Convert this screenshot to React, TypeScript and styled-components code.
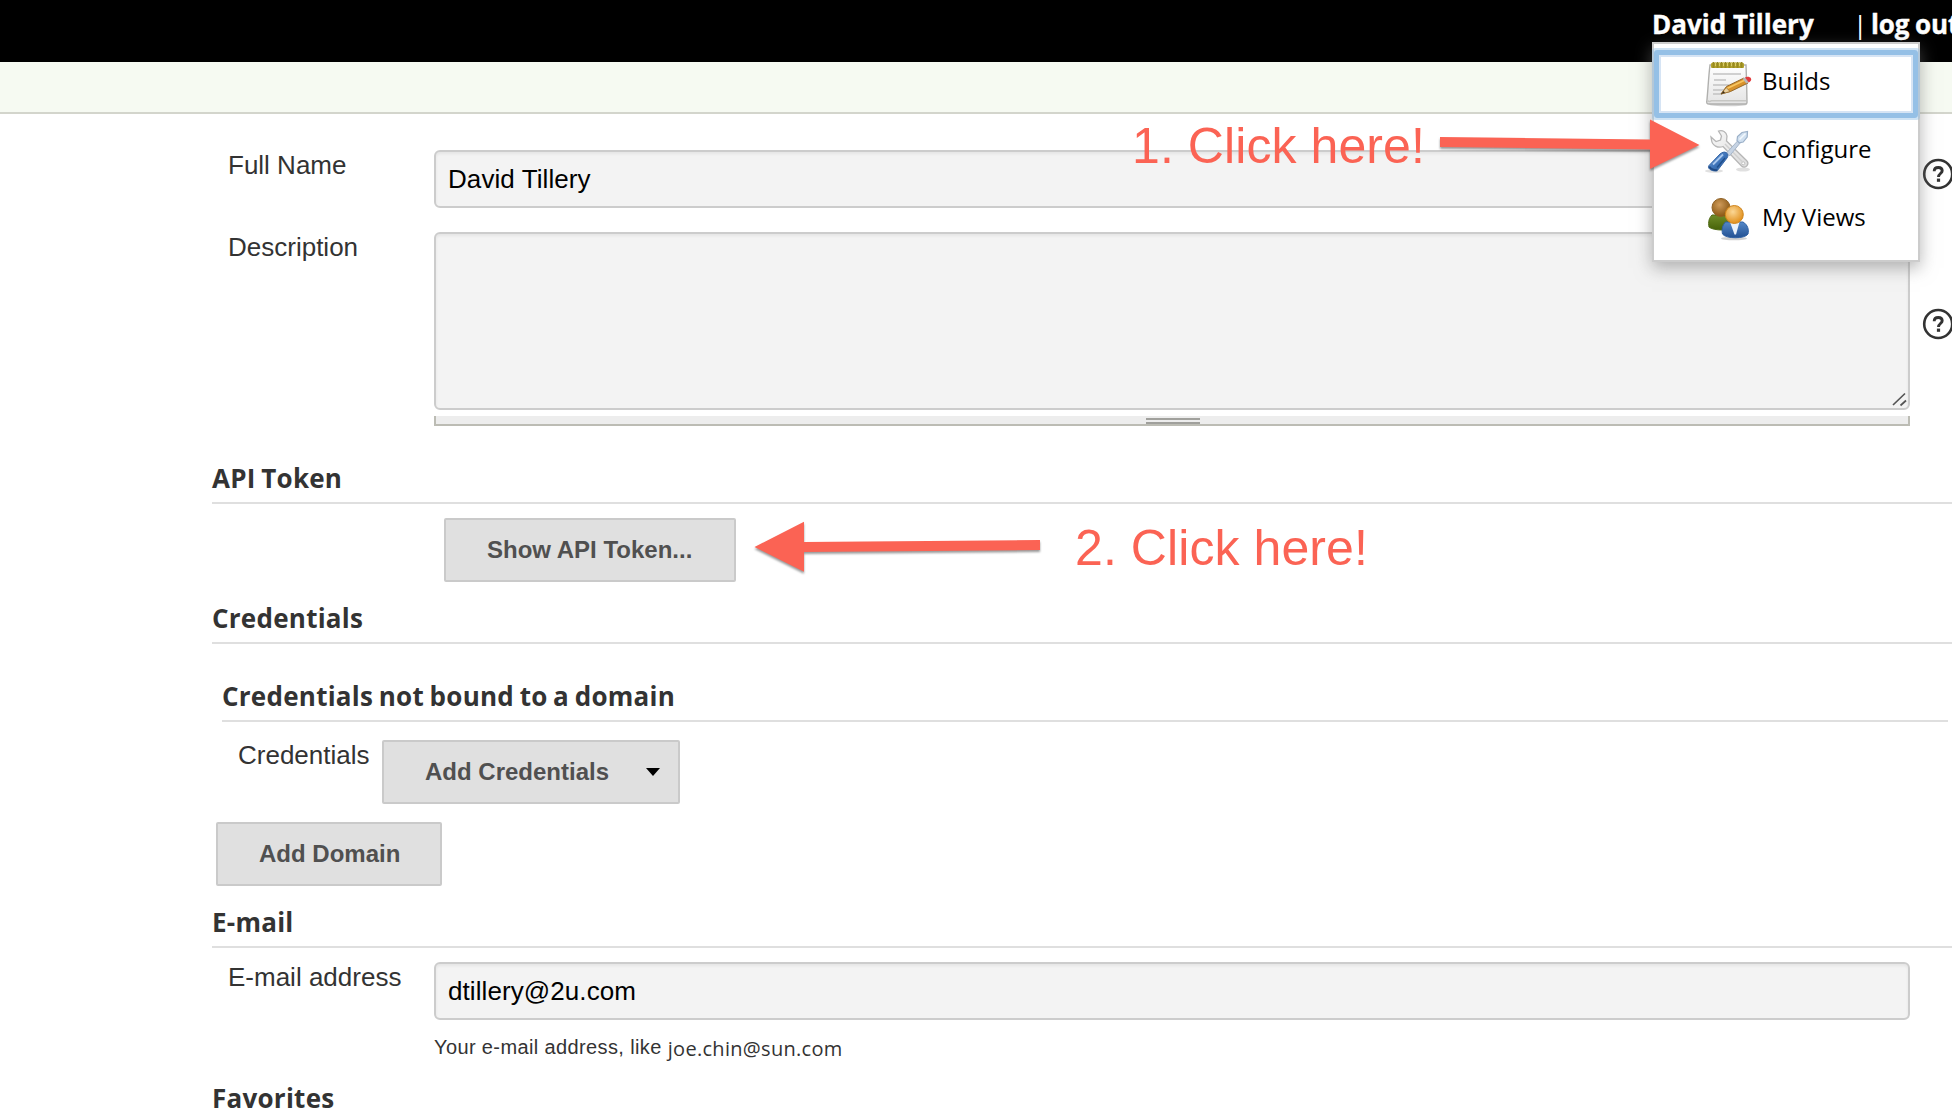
import React from "react";
import styled, { createGlobalStyle } from "styled-components";

const GlobalStyle = createGlobalStyle`
  html, body { margin: 0; padding: 0; background: #fff; }
  body { overflow: hidden; }
  *, *::before, *::after { box-sizing: border-box; }
`;

const sans = `"Liberation Sans", Arial, Helvetica, sans-serif`;
const open = `"Open Sans", "Noto Sans", sans-serif`;

const Page = styled.div`
  position: relative;
  width: 1952px;
  height: 1110px;
  overflow: hidden;
  background: #fff;
  color: #333;
  font: 26px/30px ${sans};
`;

const Header = styled.header`
  display: flex;
  justify-content: flex-start;
  height: 62px;
  padding: 6px 0 0 1652px;
  background: #000;
  color: #fff;
  font: bold 26px/36px ${open};
  white-space: nowrap;
  -webkit-text-stroke: 0.4px #fff;
`;

const UserName = styled.span`
  flex: none;
  width: 201px;
`;

const Divider = styled.span`
  flex: none;
  width: 18px;
  font-weight: 400;
  text-align: left;
  -webkit-text-stroke: 0;
`;

const LogOut = styled.a`
  flex: none;
  color: #fff;
  letter-spacing: -0.1px;
  word-spacing: -1px;
`;

const Breadcrumbs = styled.div`
  height: 52px;
  background: #f6faf2;
  border-bottom: 2px solid #d3d5cc;
`;

const Form = styled.main`
  display: flex;
  flex-direction: column;
  padding: 36px 0 0 212px;
`;

const Row = styled.div<{ $gap?: number }>`
  display: flex;
  align-items: flex-start;
  padding-left: 16px;
  margin-top: ${(p) => p.$gap ?? 0}px;
`;

const Label = styled.label<{ $width?: number }>`
  flex: none;
  width: ${(p) => p.$width ?? 206}px;
  line-height: 30px;
  white-space: nowrap;
`;

const Control = styled.div`
  display: flex;
  flex: none;
  flex-direction: column;
  width: 1476px;
`;

const field = `
  display: block;
  width: 100%;
  margin: 0;
  padding: 0 12px;
  border: 2px solid #ccc;
  border-radius: 6px;
  background: #f3f3f3;
  box-shadow: inset 0 2px 3px rgba(0, 0, 0, 0.06);
  color: #000;
  font: 26px/30px ${sans};
  letter-spacing: 0.08px;
  outline: none;
`;

const TextInput = styled.input`
  ${field}
  height: 58px;
`;

const AreaFrame = styled.div`
  position: relative;
  height: 178px;
`;

const TextArea = styled.textarea`
  ${field}
  height: 178px;
  resize: none;
`;

const ResizeCorner = styled.svg`
  position: absolute;
  right: 2px;
  bottom: 2px;
`;

const DragHandle = styled.div`
  display: flex;
  justify-content: center;
  height: 10px;
  margin-top: 6px;
  padding-top: 2px;
  background: #ededed;
  border: 2px solid #bcbcb4;
  border-top: 0;
`;

const Grip = styled.div`
  width: 54px;
  height: 6px;
  border: 2px solid #a0a09c;
  border-width: 2px 0;
  margin-left: 2px;
`;

const HelpSlot = styled.div`
  align-self: center;
  flex: none;
  width: 32px;
  height: 32px;
  margin: 0 0 10px 12px;
`;

const SectionTitle = styled.h2<{ $gap: number; $inset?: boolean }>`
  height: 44px;
  margin: ${(p) => p.$gap}px ${(p) => (p.$inset ? 4 : 0)}px 0 ${(p) => (p.$inset ? 10 : 0)}px;
  border-bottom: 2px solid #dfdfdf;
  font: bold 26px/36px ${open};
  letter-spacing: 0.25px;
  word-spacing: -1.4px;
  white-space: nowrap;
`;

const ButtonRow = styled.div<{ $indent: number; $gap: number }>`
  display: flex;
  padding-left: ${(p) => p.$indent}px;
  margin-top: ${(p) => p.$gap}px;
`;

const Button = styled.button<{ $width: number }>`
  display: flex;
  align-items: center;
  justify-content: space-between;
  width: ${(p) => p.$width}px;
  height: 64px;
  padding: 0 18px 0 41px;
  border: 2px solid #cacaca;
  border-radius: 2px;
  background: #e0e0e0;
  color: #505050;
  font: bold 24px/28px ${sans};
  white-space: nowrap;
`;

const Hint = styled.div`
  margin-top: 15px;
  font-size: 20px;
  line-height: 24px;
  white-space: nowrap;
  letter-spacing: 0.38px;
`;

const HintMail = styled.span`
  display: inline-block;
  transform: translateY(2px);
  font-family: ${open};
  letter-spacing: 0.3px;
`;

const Menu = styled.nav`
  position: absolute;
  left: 1652px;
  top: 42px;
  width: 268px;
  height: 220px;
  padding: 11px 5px 0;
  border: 2px solid #ccc;
  background: #fff;
  box-shadow: 0 6px 16px rgba(120, 120, 120, 0.55);
`;

const MenuItem = styled.a<{ $focused?: boolean }>`
  display: flex;
  align-items: center;
  height: 58px;
  margin-bottom: 10px;
  padding-left: ${(p) => (p.$focused ? 44 : 46)}px;
  border: ${(p) => (p.$focused ? "2px solid #d6e4f4" : "0")};
  border-radius: ${(p) => (p.$focused ? "1px" : "0")};
  box-shadow: ${(p) => (p.$focused ? "0 0 0 5px #95c0e6, 0 0 0 7px rgba(149,192,230,.45)" : "none")};
  color: #000;
  font: 24px/34px ${open};
  white-space: nowrap;

  svg { flex: none; margin-right: 9px; }
  span { margin-top: -6px; }
`;

const Callout = styled.div<{ $x: number; $y: number }>`
  position: absolute;
  left: ${(p) => p.$x}px;
  top: ${(p) => p.$y}px;
  color: #fb6354;
  font: 50px/56px ${sans};
  letter-spacing: 0.08px;
  white-space: nowrap;
`;

const Arrow = styled.svg<{ $x: number; $y: number }>`
  position: absolute;
  left: ${(p) => p.$x}px;
  top: ${(p) => p.$y}px;
  overflow: visible;
  filter: drop-shadow(0 2px 1px rgba(0, 0, 0, 0.4));
`;

function HelpIcon() {
  return (
    <HelpSlot>
      <svg width="32" height="32" viewBox="0 0 32 32">
        <circle cx="16.200" cy="16" r="14" fill="none" stroke="#333" strokeWidth="2.600" />
        <path d="M12.200 13.300C12.200 10.600 13.800 9.500 16.300 9.500C18.700 9.500 20.200 10.800 20.200 12.800C20.200 15.500 16.500 15.600 16.500 18.900" fill="none" stroke="#333" strokeWidth="2.900" />
        <rect x="14.900" y="20.600" width="3.200" height="3.200" fill="#333" />
      </svg>
    </HelpSlot>
  );
}

function NotepadIcon() {
  return (
    <svg width="48" height="48" viewBox="0 0 48 48">
      <defs>
        <linearGradient id="paper" x1="0" y1="0" x2="0" y2="1">
          <stop offset="0" stopColor="#fff" />
          <stop offset="1" stopColor="#e4e4e4" />
        </linearGradient>
      </defs>
      <ellipse cx="23" cy="44.500" rx="19" ry="1.800" fill="#000" opacity=".18" />
      <path d="M5 5h36c.5 12 .8 25 1 37.500c0 1-.8 1.500-1.500 1.500H4c-2 0-2.500-1-2.200-2.500C3 30 3.500 17 5 5z" fill="url(#paper)" stroke="#b0b0ae" strokeWidth="1.400" />
      <path d="M2.500 40.500c1 1.500 3 1 4 .2h34.500" fill="none" stroke="#c6c6c3" strokeWidth="1.500" />
      <path d="M8 14h28M9 20h12M8 25h16M8 30h11M8 34h9" stroke="#c2c2c2" strokeWidth="1.700" />
      <rect x="6" y="3" width="33" height="5" rx="1" fill="#b5a42c" />
      <path d="M8.500 2v6M12.500 2v6M16.500 2v6M20.500 2v6M24.500 2v6M28.500 2v6M32.500 2v6M36.500 2v6" stroke="#978a20" strokeWidth="2" />
      <path d="M10.500 2v4M14.500 2v4M18.500 2v4M22.500 2v4M26.500 2v4M30.500 2v4M34.500 2v4" stroke="#d8cc6a" strokeWidth="1" />
      <path d="M16 34l5.500-7.500L39 18l4 5L25.500 31.500z" fill="#d8922c" stroke="#94682a" strokeWidth="1" />
      <path d="M22 28.500L40 20" stroke="#f7c661" strokeWidth="1.800" />
      <path d="M16 34l5.200-6.500 3.800 4z" fill="#ecd2a0" stroke="#94682a" strokeWidth=".7" />
      <path d="M16 34l2.500-3 1.500 1.700z" fill="#3a2c18" />
      <path d="M37.500 18.700l3-1.500 3.800 4.800-3 1.600z" fill="#b8b8b8" />
      <path d="M40 17.500c2-1.200 5-.8 5.900.8s0 3.200-2 4.200z" fill="#e33a3c" />
    </svg>
  );
}

function ToolsIcon() {
  return (
    <svg width="48" height="48" viewBox="0 0 48 48">
      <defs>
        <linearGradient id="steel" x1="0" y1="0" x2="1" y2="1">
          <stop offset="0" stopColor="#f7f7f7" />
          <stop offset="1" stopColor="#dcdcdc" />
        </linearGradient>
        <linearGradient id="grip" x1="0" y1="0" x2="1" y2="1">
          <stop offset="0" stopColor="#7ba6dc" />
          <stop offset=".5" stopColor="#3f75bb" />
          <stop offset="1" stopColor="#23538f" />
        </linearGradient>
      </defs>
      <ellipse cx="9" cy="43" rx="9" ry="1.800" fill="#000" opacity=".12" />
      <ellipse cx="38" cy="41.500" rx="7" ry="2" fill="#000" opacity=".12" />
      <path d="M13.500 3c4-1.500 8 1 8.500 5l-.5 5L41.500 32.500c3.500 3.500-1 9-5 5.500L18 18.500c-5 2-11-1-11.500-6.500L6 9l5 4.500 4.500-1.500 1-4z" fill="url(#steel)" stroke="#b6b6b6" strokeWidth="1.300" />
      <path d="M20 16l17 17.500" stroke="#d0d0d0" strokeWidth="1.500" />
      <circle cx="38.200" cy="35.300" r="1.500" fill="#fff" stroke="#c0c0c0" />
      <path d="M21.500 25L33 12.500l2.300 2.300L24.500 28z" fill="#c6d3e3" stroke="#a6b6ca" strokeWidth="1" />
      <path d="M32 12.500l.5-4L37 4.500l5.500-1L42.200 9l-4 5-4 .8z" fill="#cfdfef" stroke="#9bb0c8" strokeWidth="1.200" />
      <path d="M34.500 11.500L40.500 5.500" stroke="#f2f8fd" strokeWidth="1.600" />
      <path d="M4 37.500L15 26c2-1.500 4-2.500 6-1.500s2.500 3.500 1 5.500L13 41.800c-2.500 3-12-.5-9-4.300z" fill="url(#grip)" stroke="#3565a6" strokeWidth="1" />
      <path d="M8 36.500L18 26.500" stroke="#a9c8ee" strokeWidth="1.800" />
      <path d="M12 39.500l8-9.500" stroke="#1f4e8b" strokeWidth="1.200" />
      <path d="M4.300 38.500c1 2.500 5 4 8 3.700" fill="none" stroke="#1f4a85" strokeWidth="2" />
    </svg>
  );
}

function PeopleIcon() {
  return (
    <svg width="48" height="48" viewBox="0 0 48 48">
      <defs>
        <radialGradient id="brown" cx=".42" cy=".35" r=".65">
          <stop offset="0" stopColor="#cf9b5a" />
          <stop offset="1" stopColor="#8a5713" />
        </radialGradient>
        <radialGradient id="orange" cx=".42" cy=".35" r=".65">
          <stop offset="0" stopColor="#fbd795" />
          <stop offset="1" stopColor="#e18f1b" />
        </radialGradient>
        <linearGradient id="green" x1="0" y1="0" x2="0" y2="1">
          <stop offset="0" stopColor="#6f8c28" />
          <stop offset="1" stopColor="#466208" />
        </linearGradient>
        <linearGradient id="blue" x1="0" y1="0" x2="0" y2="1">
          <stop offset="0" stopColor="#5588c8" />
          <stop offset="1" stopColor="#235193" />
        </linearGradient>
      </defs>
      <ellipse cx="29" cy="42.500" rx="13" ry="1.800" fill="#000" opacity=".18" />
      <path d="M7 19h18c5 4 6 9 5 12c-3 4-22 4-26 0c-1-5 0-9 3-12z" fill="url(#green)" stroke="#4f6a16" />
      <circle cx="16" cy="11.500" r="9" fill="url(#brown)" stroke="#8e6023" />
      <path d="M20.500 26h17.500c5 3 6 8 5 12c-3 5-22 5-25.500 0c-1-5 0-9 3-12z" fill="url(#blue)" stroke="#2f61a4" />
      <path d="M25 26h9.500L31 38.500h-1.500z" fill="#eaf1fa" />
      <circle cx="29.300" cy="18.500" r="9" fill="url(#orange)" stroke="#cf841b" />
    </svg>
  );
}

export default function App() {
  return (
    <Page>
      <GlobalStyle />
      <Header>
        <UserName>David Tillery</UserName>
        <Divider>|</Divider>
        <LogOut>log out</LogOut>
      </Header>
      <Breadcrumbs />

      <Form>
        <Row>
          <Label>Full Name</Label>
          <Control>
            <TextInput defaultValue="David Tillery" />
          </Control>
          <HelpIcon />
        </Row>
        <Row $gap={24}>
          <Label>Description</Label>
          <Control>
            <AreaFrame>
              <TextArea />
              <ResizeCorner width="18" height="18" viewBox="0 0 18 18">
                <path d="M3 15L15 3.500M10.500 15.500L16 10.500" stroke="#555" strokeWidth="1.700" />
              </ResizeCorner>
            </AreaFrame>
            <DragHandle>
              <Grip />
            </DragHandle>
          </Control>
          <HelpIcon />
        </Row>

        <SectionTitle $gap={34}>API Token</SectionTitle>
        <ButtonRow $indent={232} $gap={14}>
          <Button $width={292}>Show API Token...</Button>
        </ButtonRow>

        <SectionTitle $gap={18}>Credentials</SectionTitle>
        <SectionTitle $gap={34} $inset>
          Credentials not bound to a domain
        </SectionTitle>
        <ButtonRow $indent={26} $gap={18}>
          <Label $width={144}>Credentials</Label>
          <Button $width={298}>
            Add Credentials
            <svg width="14" height="8" viewBox="0 0 14 8">
              <path d="M0 0h14L7 8z" fill="#000" />
            </svg>
          </Button>
        </ButtonRow>
        <ButtonRow $indent={4} $gap={18}>
          <Button $width={226}>Add Domain</Button>
        </ButtonRow>

        <SectionTitle $gap={18}>E-mail</SectionTitle>
        <Row $gap={14}>
          <Label>E-mail address</Label>
          <Control>
            <TextInput defaultValue="dtillery@2u.com" />
            <Hint>
              Your e-mail address, like <HintMail>joe.chin@sun.com</HintMail>
            </Hint>
          </Control>
        </Row>
        <SectionTitle $gap={21}>Favorites</SectionTitle>
      </Form>

      <Menu>
        <MenuItem $focused>
          <NotepadIcon />
          <span>Builds</span>
        </MenuItem>
        <MenuItem>
          <ToolsIcon />
          <span>Configure</span>
        </MenuItem>
        <MenuItem>
          <PeopleIcon />
          <span>My Views</span>
        </MenuItem>
      </Menu>

      <Callout $x={1132} $y={118}>1. Click here!</Callout>
      <Arrow $x={1440} $y={119} width="260" height="52" viewBox="0 0 260 52">
        <path d="M0 18L210 20.500V.5L259.500 26L210 50V30.500L0 28z" fill="#fb6354" />
      </Arrow>
      <Callout $x={1075} $y={520}>2. Click here!</Callout>
      <Arrow $x={754} $y={521} width="286" height="52" viewBox="0 0 286 52">
        <path d="M.5 26L50 .7V21L286 19V29L50 31V50.700z" fill="#fb6354" />
      </Arrow>
    </Page>
  );
}
